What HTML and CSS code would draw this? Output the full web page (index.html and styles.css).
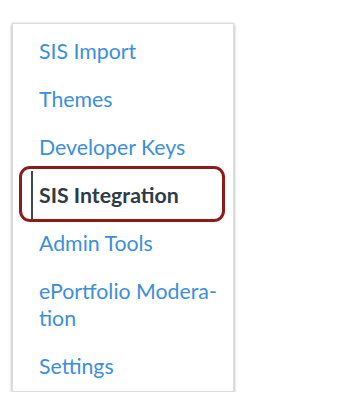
FILE: index.html
```html
<!DOCTYPE html>
<html lang="en">
<head>
  <meta charset="UTF-8" />
  <meta name="viewport" content="width=device-width, initial-scale=1.0" />
  <title>Account Navigation</title>
  <link rel="stylesheet" href="styles.css">
</head>
<body>
  <nav class="menu">
    <ul class="menu-list">
      <li><a href="#">SIS Import</a></li>
      <li><a href="#">Themes</a></li>
      <li><a href="#">Developer Keys</a></li>
      <li class="active"><a href="#">SIS Integration</a></li>
      <li><a href="#">Admin Tools</a></li>
      <li><a href="#">ePortfolio Modera-<br>tion</a></li>
      <li><a href="#">Settings</a></li>
    </ul>
  </nav>
</body>
</html>
```

FILE: styles.css
```css
* {
  box-sizing: border-box;
}
body {
  margin: 0;
  padding: 23px 0 0 12px;
  background: #fff;
  font-family: Lato, 'Open Sans', sans-serif;
}
.menu {
  width: 222px;
  background: #fff;
  border: 1px solid #dcdcdc;
  box-shadow: 0 1px 3px rgba(0, 0, 0, 0.4);
}
.menu-list {
  list-style: none;
  margin: 0;
  padding: 3px 0 1px 0;
}
.menu-list li {
  position: relative;
  padding-left: 18px;
}
.menu-list a {
  display: block;
  padding: 10.5px 0 10.5px 6px;
  border-left: 2px solid transparent;
  font-size: 21.3px;
  line-height: 27px;
  color: #3b8fdb;
  text-decoration: none;
}
.menu-list .active a {
  color: #2d3b45;
  font-weight: 700;
  border-left-color: #3d4a55;
}
.menu-list .active::after {
  content: "";
  position: absolute;
  left: 6px;
  right: 8px;
  top: -5px;
  bottom: -3px;
  border: 3.5px solid #8e1b1b;
  border-radius: 11px;
}
```
